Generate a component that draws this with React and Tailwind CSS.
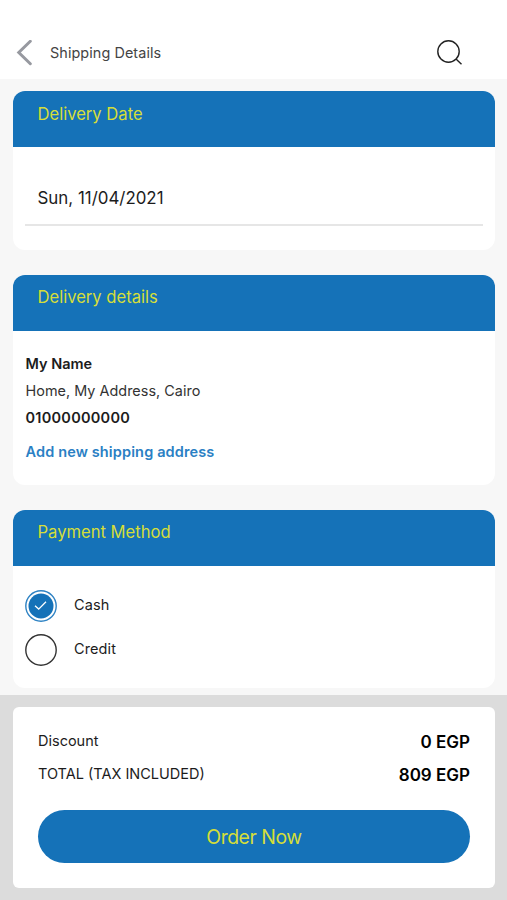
function Card({ title, className, titleClassName, children }) {
  return (
    <section className={`shrink-0 overflow-hidden rounded-xl bg-white ${className}`}>
      <h2 className={`h-14 bg-[#1572b8] pl-[24.5px] text-[16.6px] leading-6 text-[#d5de39] ${titleClassName}`}>
        {title}
      </h2>
      {children}
    </section>
  );
}

function PaymentOption({ label, checked }) {
  return (
    <div className="flex h-8 items-center gap-[17px]">
      {checked ? (
        <svg className="size-8" viewBox="0 0 32 32" fill="none">
          <circle cx="16" cy="16" r="15.2" stroke="#2f83c4" strokeWidth="1.4" />
          <circle cx="16" cy="16" r="12.5" fill="#1572b8" />
          <path d="m10 15.7 3.7 3.4 7.3-7.4" stroke="white" strokeWidth="1.3" />
        </svg>
      ) : (
        <svg className="size-8" viewBox="0 0 32 32" fill="none" stroke="#333" strokeWidth="1.4">
          <circle cx="16" cy="16" r="15.2" />
        </svg>
      )}
      <span className="-mt-0.5 text-[14.5px] leading-5 tracking-[0.1px]">{label}</span>
    </div>
  );
}

export default function App() {
  return (
    <div className="flex h-[900px] w-[507px] flex-col overflow-hidden bg-[#f7f7f7] font-['Inter',sans-serif] text-[#1c1c1c]">
      <header className="flex h-[79px] shrink-0 items-center bg-white pl-4 pr-11 pt-[26px]">
        <svg className="h-[26px] w-4" viewBox="0 0 16 26" fill="none" stroke="#9799a0" strokeWidth="3" strokeLinecap="round">
          <path d="M14.3 1.3 2.8 12.5 14.3 23.7" />
        </svg>
        <h1 className="ml-[18px] text-[14.4px] leading-5 tracking-[0.08px] text-[#444]">Shipping Details</h1>
        <svg className="ml-auto size-[26px]" viewBox="0 0 26 26" fill="none" stroke="#222" strokeWidth="1.4">
          <circle cx="11.5" cy="11.5" r="10.7" />
          <path d="m19 19 5.5 5.3" />
        </svg>
      </header>

      <main className="flex h-[616px] shrink-0 flex-col gap-[25px] pl-[13px] pr-3 pt-[12px]">
        <Card title="Delivery Date" className="h-[159px]" titleClassName="pt-[11px]">
          <div className="mx-3 mt-[33px] flex h-[46px] items-start border-b-2 border-[#e6e6e6] pl-[12.5px] pt-1.5 text-[16.9px] leading-6">
            Sun, 11/04/2021
          </div>
        </Card>

        <Card title="Delivery details" className="h-[210px]" titleClassName="pt-2.5">
          <div className="pl-[12.5px] pt-[19px] text-[14.5px] leading-[27px]">
            <p className="font-semibold">My Name</p>
            <p className="text-[14.4px] tracking-[0.03px] text-[#333]">Home, My Address, Cairo</p>
            <p className="font-semibold tracking-[0.25px]">01000000000</p>
            <a className="mt-[7px] block font-semibold tracking-[0.14px] text-[#2a80c4]">Add new shipping address</a>
          </div>
        </Card>

        <Card title="Payment Method" className="h-[178px]" titleClassName="pt-2.5">
          <div className="flex flex-col gap-3 pl-3 pt-6">
            <PaymentOption label="Cash" checked />
            <PaymentOption label="Credit" />
          </div>
        </Card>
      </main>

      <footer className="h-[205px] shrink-0 bg-[#dcdcdc] pl-[13px] pr-3 pt-3">
        <div className="h-[181px] rounded-md bg-white px-[25px] pt-[17px]">
          <div className="flex h-[33px] justify-between">
            <span className="text-[14.5px] leading-[33px]">Discount</span>
            <span className="pt-0.5 text-[17px] font-semibold leading-[33px] text-black">0 EGP</span>
          </div>
          <div className="flex h-[33px] justify-between">
            <span className="text-[14.5px] leading-[33px]">TOTAL (TAX INCLUDED)</span>
            <span className="pt-0.5 text-[17px] font-semibold leading-[33px] text-black">809 EGP</span>
          </div>
          <button className="mt-5 h-[53px] w-full rounded-full bg-[#1572b8] pt-0.5 text-[19.4px] tracking-[-0.45px] text-[#d5de39]">
            Order Now
          </button>
        </div>
      </footer>
    </div>
  );
}
